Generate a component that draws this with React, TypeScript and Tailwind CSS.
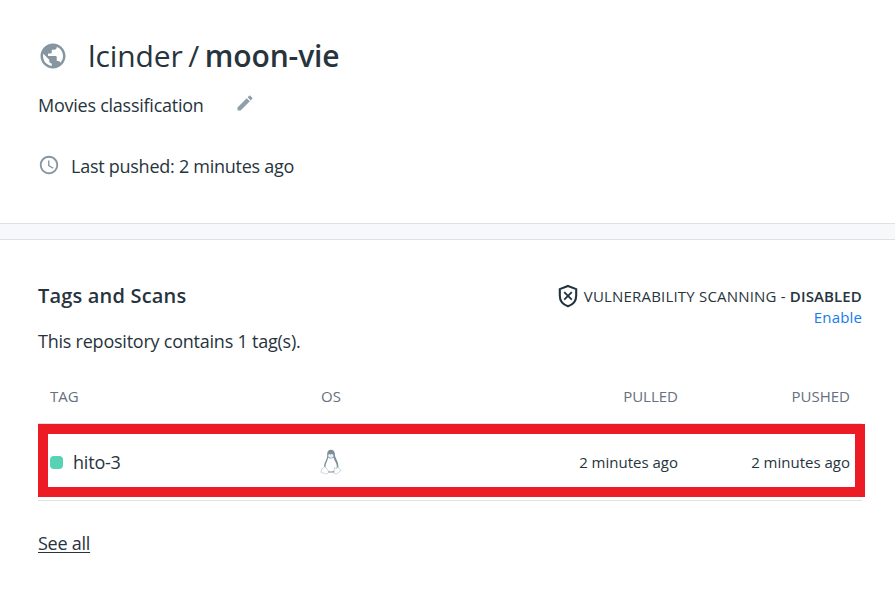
import { MdPublic, MdEdit, MdAccessTime } from 'react-icons/md';

function ShieldIcon() {
  return (
    <svg className="h-6 w-6" viewBox="0 0 24 24" fill="none" stroke="#22333d">
      <path d="M12 1.9 L20.2 5.1 V11.5 C20.2 16.6 17 20.6 12 22.3 C7 20.6 3.8 16.6 3.8 11.5 V5.1 Z" strokeWidth="2.1" />
      <path d="M8.2 8.1 L15.8 15.7 M15.8 8.1 L8.2 15.7" strokeWidth="1.8" />
    </svg>
  );
}

function LinuxIcon() {
  return (
    <svg className="-ml-px h-[26px] w-[22px]" viewBox="0 0 22 26">
      <path d="M7.2 5.5 C7 2.4 8.4 .8 11 .8 C13.7 .8 15 2.8 15 6 C15 9.2 18.4 12 18.4 17 C18.4 20 17 22.7 14.8 23.5 H7.5 C5 22 3.8 20 4.1 16.8 C4.4 13 7.6 10 7.2 5.5Z" fill="#7c909c" />
      <path d="M8.1 8.6 Q11 10.5 13.6 8.5 C14 11.5 17 13.7 16.8 17.5 C16.7 20.8 13.8 22.5 11 22.5 C8 22.5 5.5 20.3 5.5 17.2 C5.5 14.2 7.9 12 8.1 8.6Z" fill="#fff" />
      <path d="M8.2 5.8 Q9.2 4.4 10.2 5.8 Q11.8 4.2 13.4 5.9 L13.3 8 L10.8 9 L8.4 7.8Z" fill="#edf0f2" />
      <path d="M4.4 17.7 L6 18.7 L8.4 22 C8.4 24.8 6.8 25.4 4.5 24.4 L1 23.5 L1.5 19.8 L3.2 19.5Z" fill="#fff" stroke="#bcc6cc" strokeWidth=".7" />
      <path d="M14.5 18.6 L16 19.8 L18.2 18.1 L18.8 19.5 L21.2 21.4 L16.8 24.7 C15.3 25.5 14 24.8 14.1 23Z" fill="#fff" stroke="#bcc6cc" strokeWidth=".7" />
    </svg>
  );
}

export default function App() {
  return (
    <main className="h-[597px] w-[895px] overflow-hidden whitespace-nowrap bg-white font-['Open_Sans',sans-serif] text-[#27343d]">
      <header className="flex h-56 flex-col border-b border-[#dde1e5] pl-[38px] pt-9">
        <div className="flex h-10 items-center">
          <MdPublic className="h-[30px] w-[30px] text-[#8596a1]" />
          <h1 className="ml-5 text-[30px] leading-10">
            <span className="tracking-[-0.1px]">lcinder</span>
            <span className="mx-[5.5px]">/</span>
            <b className="font-semibold tracking-[-0.1px]">moon-vie</b>
          </h1>
        </div>
        <div className="mt-[15px] flex h-7 items-center">
          <p className="w-[197px] text-lg tracking-[-0.25px]">Movies classification</p>
          <MdEdit className="mb-1 h-5 w-5 text-[#8f9faa]" />
        </div>
        <div className="mt-[33px] flex h-7 items-center">
          <MdAccessTime className="mb-0.5 h-[22px] w-[22px] text-[#8596a1]" />
          <p className="ml-[11px] text-lg tracking-[-0.26px]">Last pushed: 2 minutes ago</p>
        </div>
      </header>
      <div className="h-4 border-b border-[#dde1e5] bg-[#f7f8fa]" />
      <section className="pl-[38px] pr-[33px] pt-[42px]">
        <div className="flex h-[45px] justify-between">
          <h2 className="text-xl font-semibold tracking-[0.18px]">Tags and Scans</h2>
          <div className="flex flex-col items-end pt-[3px]">
            <div className="flex h-[22px] items-center text-[15px]">
              <ShieldIcon />
              <span className="ml-1 tracking-[0.19px]">VULNERABILITY SCANNING - <b className="font-semibold tracking-[0.13px]">DISABLED</b></span>
            </div>
            <a className="text-[15px] leading-5 tracking-[0.15px] text-[#137cef]">Enable</a>
          </div>
        </div>
        <p className="text-lg leading-7 tracking-[-0.23px]">This repository contains 1 tag(s).</p>
        <div className="relative mt-7">
          <div className="grid h-[41px] grid-cols-[271px_200px_157px_172px] border-b border-[#dfe1e3] pl-3 text-[15px] leading-[27px] text-[#657080]">
            <span>TAG</span>
            <span>OS</span>
            <span className="text-right">PULLED</span>
            <span className="text-right">PUSHED</span>
          </div>
          <div className="grid h-[77px] grid-cols-[271px_200px_157px_172px] items-center border-b border-[#dfe1e3] pl-3 text-[15px]">
            <div className="flex items-center text-lg tracking-[-0.2px]">
              <i className="mr-[10px] h-[13px] w-[13px] rounded bg-[#57d2b2]" />
              hito-3
            </div>
            <LinuxIcon />
            <span className="text-right">2 minutes ago</span>
            <span className="text-right">2 minutes ago</span>
          </div>
          <div className="absolute left-0 top-[41px] h-[73px] w-[827px] border-10 border-[#ed1c24]" />
        </div>
        <a className="mt-7 inline-block text-lg tracking-[-0.25px] underline underline-offset-2">See all</a>
      </section>
    </main>
  );
}
